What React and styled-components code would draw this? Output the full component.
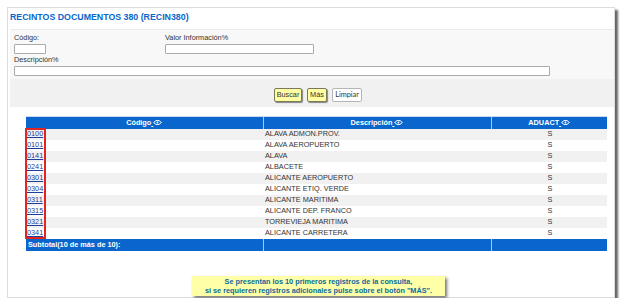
import React from "react";
import styled, { createGlobalStyle } from "styled-components";

const GlobalStyle = createGlobalStyle`
  html, body {
    margin: 0;
    padding: 0;
    background: #ffffff;
  }
  body {
    font-family: "Liberation Sans", Arial, sans-serif;
    font-size: 7.3px;
    color: #333333;
  }
`;

const rows = [
  ["0100", "ALAVA ADMON.PROV.", "S"],
  ["0101", "ALAVA AEROPUERTO", "S"],
  ["0141", "ALAVA", "S"],
  ["0241", "ALBACETE", "S"],
  ["0301", "ALICANTE AEROPUERTO", "S"],
  ["0304", "ALICANTE ETIQ. VERDE", "S"],
  ["0311", "ALICANTE MARITIMA", "S"],
  ["0315", "ALICANTE DEP. FRANCO", "S"],
  ["0321", "TORREVIEJA MARITIMA", "S"],
  ["0341", "ALICANTE CARRETERA", "S"]
];

function SortIcon() {
  return (
    <svg width="9" height="5" viewBox="0 0 9 5">
      <path
        d="M0.6 2.5 L3 0.6 H6 L8.4 2.5 L6 4.4 H3 Z"
        fill="none"
        stroke="#ffffff"
        strokeWidth="1"
      />
      <circle cx="4.5" cy="2.5" r="0.9" fill="#ffffff" />
    </svg>
  );
}

export default function App() {
  return (
    <>
      <GlobalStyle />
      <Panel>
        <Title>RECINTOS DOCUMENTOS 380 (RECIN380)</Title>
        <Filters>
          <Fields>
            <Field>
              <Label>Código:</Label>
              <Input $width={32} />
            </Field>
            <Field>
              <Label>Valor Información%</Label>
              <Input $width={149} />
            </Field>
            <Field $wide>
              <Label>Descripción%</Label>
              <Input $width={536} />
            </Field>
          </Fields>
          <ButtonBand>
            <ActionButton $width={28}>Buscar</ActionButton>
            <ActionButton $width={20}>Más</ActionButton>
            <ActionButton $width={30} $plain>
              Limpiar
            </ActionButton>
          </ButtonBand>
        </Filters>

        <TableWrap>
          <Table>
            <colgroup>
              <col style={{ width: 237 }} />
              <col style={{ width: 228 }} />
              <col style={{ width: 116 }} />
            </colgroup>
            <thead>
              <tr>
                <HeadCell>
                  Código<SortLink> <SortIcon /></SortLink>
                </HeadCell>
                <HeadCell>
                  Descripción<SortLink> <SortIcon /></SortLink>
                </HeadCell>
                <HeadCell>
                  ADUACT<SortLink> <SortIcon /></SortLink>
                </HeadCell>
              </tr>
            </thead>
            <tbody>
              {rows.map(([code, desc, flag], i) => (
                <Row key={code} $odd={i % 2 === 0}>
                  <Cell>
                    <CodeLink href="#">{code}</CodeLink>
                  </Cell>
                  <Cell>{desc}</Cell>
                  <Cell $center>{flag}</Cell>
                </Row>
              ))}
              <SubtotalRow>
                <SubtotalCell>Subtotal(10 de más de 10):</SubtotalCell>
                <SubtotalCell />
                <SubtotalCell />
              </SubtotalRow>
            </tbody>
          </Table>
          <Highlight />
        </TableWrap>

        <NoticeRow>
          <Notice>
            Se presentan los 10 primeros registros de la consulta,
            <br />
            si se requieren registros adicionales pulse sobre el botón "MÁS".
          </Notice>
        </NoticeRow>
      </Panel>
    </>
  );
}

const Panel = styled.div`
  box-sizing: border-box;
  margin: 7px 0 0 7px;
  width: 608px;
  height: 291px;
  padding-left: 2px;
  background: #ffffff;
  border: 1px solid #dcdcdc;
  box-shadow: 3px 3px 2px rgba(0, 0, 0, 0.6);
  display: flex;
  flex-direction: column;
  overflow: visible;
`;

const Title = styled.div`
  padding: 3px 0 6px 0;
  line-height: 12px;
  font-size: 8.8px;
  font-weight: bold;
  color: #0a66cc;
`;

const Filters = styled.div`
  display: flex;
  flex-direction: column;
`;

const Fields = styled.div`
  display: grid;
  grid-template-columns: 151px 1fr;
  row-gap: 1px;
  padding: 3px 0 3px 4px;
  background: #f8f8f8;
  border-top: 1px solid #ececec;
`;

const Field = styled.div`
  display: flex;
  flex-direction: column;
  grid-column: ${(p) => (p.$wide ? "1 / -1" : "auto")};
`;

const Label = styled.label`
  line-height: 10px;
  color: #333333;
  margin-bottom: 1px;
`;

const Input = styled.input`
  box-sizing: border-box;
  width: ${(p) => p.$width}px;
  height: 10px;
  padding: 0;
  margin: 0;
  border: 1px solid #aaaaaa;
  border-radius: 1px;
  background: #ffffff;
`;

const ButtonBand = styled.div`
  display: flex;
  justify-content: center;
  gap: 5px;
  padding: 9px 0 5px 12px;
  background: #f1f1f1;
`;

const ActionButton = styled.button`
  box-sizing: border-box;
  width: ${(p) => p.$width}px;
  height: 14px;
  padding: 0;
  font-family: ${(p) => (p.$plain ? "Lato, sans-serif" : "\"Liberation Sans\", Arial, sans-serif")};
  font-size: 7.3px;
  line-height: 12px;
  color: #333333;
  background: ${(p) => (p.$plain ? "#ffffff" : "#ffffa4")};
  border: 1px solid ${(p) => (p.$plain ? "#b5b5b5" : "#7a7a5a")};
  border-radius: 2px;
  box-shadow: ${(p) => (p.$plain ? "none" : "1px 1px 1px rgba(0, 0, 0, 0.45)")};
`;

const TableWrap = styled.div`
  position: relative;
  width: 581px;
  margin: 9px 0 0 16px;
`;

const Table = styled.table`
  width: 581px;
  border-collapse: collapse;
  table-layout: fixed;
`;

const HeadCell = styled.th`
  box-sizing: border-box;
  height: 12px;
  padding: 0;
  line-height: 10px;
  background: #0a66cc;
  color: #ffffff;
  font-weight: bold;
  text-align: center;
  border-top: 1px solid #c6dbf2;
  & + & {
    border-left: 1px solid #a9c8ec;
  }
`;

const SortLink = styled.span`
  text-decoration: underline;
  svg {
    vertical-align: 0;
  }
`;

const Row = styled.tr`
  height: 11px;
  background: ${(p) => (p.$odd ? "#f1f1f1" : "#ffffff")};
`;

const Cell = styled.td`
  box-sizing: border-box;
  height: 11px;
  padding: 0 0 0 2px;
  line-height: 10px;
  text-align: ${(p) => (p.$center ? "center" : "left")};
  color: #333333;
  white-space: nowrap;
  overflow: hidden;
`;

const CodeLink = styled.a`
  color: #1c3f9e;
  text-decoration: underline;
  margin-left: -1px;
`;

const SubtotalRow = styled.tr`
  height: 12px;
  background: #0a66cc;
`;

const SubtotalCell = styled.td`
  box-sizing: border-box;
  height: 12px;
  padding: 0 0 0 2px;
  line-height: 10px;
  color: #ffffff;
  font-weight: bold;
  white-space: nowrap;
  & + & {
    border-left: 1px solid #a9c8ec;
  }
`;

const Highlight = styled.div`
  position: absolute;
  left: -1px;
  top: 12px;
  width: 21px;
  height: 111px;
  box-sizing: border-box;
  border: 2px solid #e2261f;
  pointer-events: none;
`;

const NoticeRow = styled.div`
  display: flex;
  justify-content: center;
  padding-left: 13px;
  margin-top: 25px;
`;

const Notice = styled.div`
  box-sizing: border-box;
  width: 253px;
  height: 20px;
  padding-top: 1px;
  background: #ffffa8;
  color: #0b6a9c;
  font-weight: bold;
  line-height: 9.4px;
  text-align: center;
  box-shadow: 2px 2px 3px rgba(0, 0, 0, 0.55);
`;
